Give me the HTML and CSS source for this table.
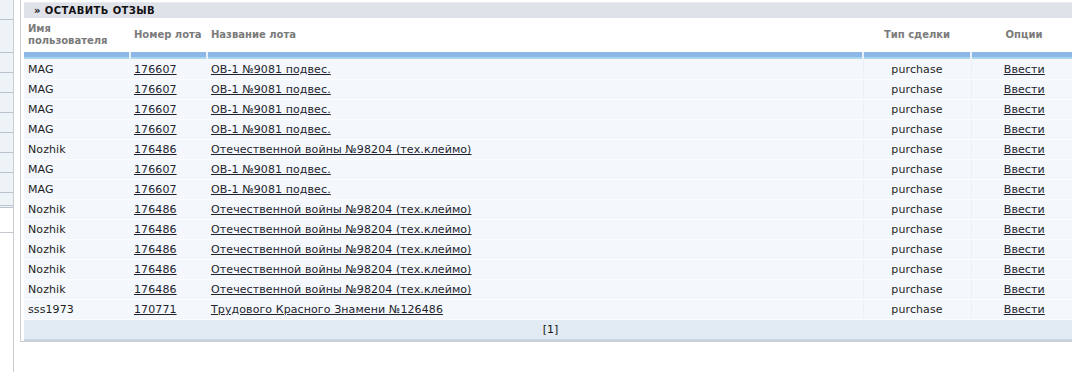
FILE: index.html
```html
<!DOCTYPE html>
<html lang="ru">
<head>
<meta charset="utf-8">
<title>Оставить отзыв</title>
<link rel="stylesheet" href="styles.css">
</head>
<body>
<div class="page">
  <div class="side">
    <div class="side-list">
      <div class="side-item"></div>
      <div class="side-item tall"></div>
      <div class="side-item"></div>
      <div class="side-item"></div>
      <div class="side-item"></div>
      <div class="side-item"></div>
      <div class="side-item"></div>
      <div class="side-item"></div>
      <div class="side-item"></div>
      <div class="side-item short"></div>
    </div>
    <div class="side-sep"></div>
  </div>
  <div class="panel">
    <div class="panel-title">» ОСТАВИТЬ ОТЗЫВ</div>
    <table class="grid">
      <colgroup>
        <col class="c1"><col class="c2"><col class="c3"><col class="c4"><col class="c5">
      </colgroup>
      <thead>
        <tr class="head">
          <th class="user">Имя<br>пользователя</th>
          <th>Номер лота</th>
          <th>Название лота</th>
          <th class="ctr">Тип сделки</th>
          <th class="ctr">Опции</th>
        </tr>
        <tr class="bar"><td></td><td></td><td></td><td></td><td></td></tr>
      </thead>
      <tbody>
        <tr><td>MAG</td><td><a href="#">176607</a></td><td><a href="#">ОВ-1 №9081 подвес.</a></td><td class="ctr">purchase</td><td class="ctr"><a href="#">Ввести</a></td></tr>
        <tr><td>MAG</td><td><a href="#">176607</a></td><td><a href="#">ОВ-1 №9081 подвес.</a></td><td class="ctr">purchase</td><td class="ctr"><a href="#">Ввести</a></td></tr>
        <tr><td>MAG</td><td><a href="#">176607</a></td><td><a href="#">ОВ-1 №9081 подвес.</a></td><td class="ctr">purchase</td><td class="ctr"><a href="#">Ввести</a></td></tr>
        <tr><td>MAG</td><td><a href="#">176607</a></td><td><a href="#">ОВ-1 №9081 подвес.</a></td><td class="ctr">purchase</td><td class="ctr"><a href="#">Ввести</a></td></tr>
        <tr><td>Nozhik</td><td><a href="#">176486</a></td><td><a href="#">Отечественной войны №98204 (тех.клеймо)</a></td><td class="ctr">purchase</td><td class="ctr"><a href="#">Ввести</a></td></tr>
        <tr><td>MAG</td><td><a href="#">176607</a></td><td><a href="#">ОВ-1 №9081 подвес.</a></td><td class="ctr">purchase</td><td class="ctr"><a href="#">Ввести</a></td></tr>
        <tr><td>MAG</td><td><a href="#">176607</a></td><td><a href="#">ОВ-1 №9081 подвес.</a></td><td class="ctr">purchase</td><td class="ctr"><a href="#">Ввести</a></td></tr>
        <tr><td>Nozhik</td><td><a href="#">176486</a></td><td><a href="#">Отечественной войны №98204 (тех.клеймо)</a></td><td class="ctr">purchase</td><td class="ctr"><a href="#">Ввести</a></td></tr>
        <tr><td>Nozhik</td><td><a href="#">176486</a></td><td><a href="#">Отечественной войны №98204 (тех.клеймо)</a></td><td class="ctr">purchase</td><td class="ctr"><a href="#">Ввести</a></td></tr>
        <tr><td>Nozhik</td><td><a href="#">176486</a></td><td><a href="#">Отечественной войны №98204 (тех.клеймо)</a></td><td class="ctr">purchase</td><td class="ctr"><a href="#">Ввести</a></td></tr>
        <tr><td>Nozhik</td><td><a href="#">176486</a></td><td><a href="#">Отечественной войны №98204 (тех.клеймо)</a></td><td class="ctr">purchase</td><td class="ctr"><a href="#">Ввести</a></td></tr>
        <tr><td>Nozhik</td><td><a href="#">176486</a></td><td><a href="#">Отечественной войны №98204 (тех.клеймо)</a></td><td class="ctr">purchase</td><td class="ctr"><a href="#">Ввести</a></td></tr>
        <tr><td>sss1973</td><td><a href="#">170771</a></td><td><a href="#">Трудового Красного Знамени №126486</a></td><td class="ctr">purchase</td><td class="ctr"><a href="#">Ввести</a></td></tr>
      </tbody>
      <tfoot>
        <tr class="pager"><td colspan="5">[1]</td></tr>
      </tfoot>
    </table>
  </div>
</div>
</body>
</html>
```

FILE: styles.css
```css
html, body {
  margin: 0;
  padding: 0;
  background: #fff;
  overflow: hidden;
}
body {
  font-family: "DejaVu Sans", Verdana, sans-serif;
  font-size: 11px;
  color: #1e1e1e;
}
.page {
  display: flex;
  width: 1100px;
  height: 372px;
}
.side {
  width: 13px;
  border-right: 1px solid #c9cdd2;
  flex: none;
}
.side-list {
  background: #eef3f8;
}
.side-item {
  height: 19px;
  border-bottom: 1px solid #b9c4cf;
}
.side-item.tall {
  height: 32px;
}
.side-item.short {
  height: 12px;
  border-bottom: 3px double #b9c4cf;
}
.side-sep {
  margin-top: 24px;
  border-top: 1px solid #c2c8ce;
}
.panel {
  margin-left: 6px;
  border-left: 1px solid #c9cdd2;
  border-bottom: 1px solid #c9cdd2;
  padding: 2px 0 3px 3px;
  height: 336px;
  flex: none;
  width: 1080px;
}
.panel-title {
  height: 16px;
  line-height: 16px;
  background: #e0e2ea;
  border-top: 1px solid #e9ebf1;
  box-sizing: border-box;
  padding-left: 10px;
  font-size: 10px;
  font-weight: bold;
  color: #111;
  letter-spacing: 0.4px;
}
.grid {
  border-collapse: collapse;
  table-layout: fixed;
  width: 1053px;
}
.c1 { width: 106px; }
.c2 { width: 77px; }
.c3 { width: 656px; }
.c4 { width: 108px; }
.c5 { width: 106px; }
.grid .head {
  height: 34px;
}
.grid th {
  padding: 0 4px;
  text-align: left;
  font-size: 10px;
  font-weight: bold;
  color: #7a7a7a;
  line-height: 12px;
  background: #fff;
  vertical-align: middle;
}
.grid th.user {
  vertical-align: top;
  padding-top: 5px;
}
.grid .ctr {
  text-align: center;
}
.grid .bar td {
  height: 8px;
  padding: 0;
  background: linear-gradient(#8cb7e6 0, #8cb7e6 5px, #a9d6ef 5px, #a9d6ef 7px, #fdf8ee 7px);
  border-left: 2px solid #e8f0f8;
}
.grid .bar td:first-child {
  border-left: 0;
}
.grid tbody td {
  height: 19px;
  padding: 0 4px;
  background: #f4f8fc;
  border-bottom: 1px solid #fbfdff;
  white-space: nowrap;
  overflow: hidden;
  letter-spacing: 0.1px;
}
.grid tbody td:nth-child(4),
.grid tbody td:nth-child(5) {
  border-left: 1px solid #ecf1f6;
}
.grid a {
  color: #23232e;
  text-decoration: underline;
}
.grid .pager td {
  height: 19px;
  padding: 0;
  text-align: center;
  background: #e2eaf3;
  border-bottom: 2px solid #c9d6e2;
  color: #111;
}
```
